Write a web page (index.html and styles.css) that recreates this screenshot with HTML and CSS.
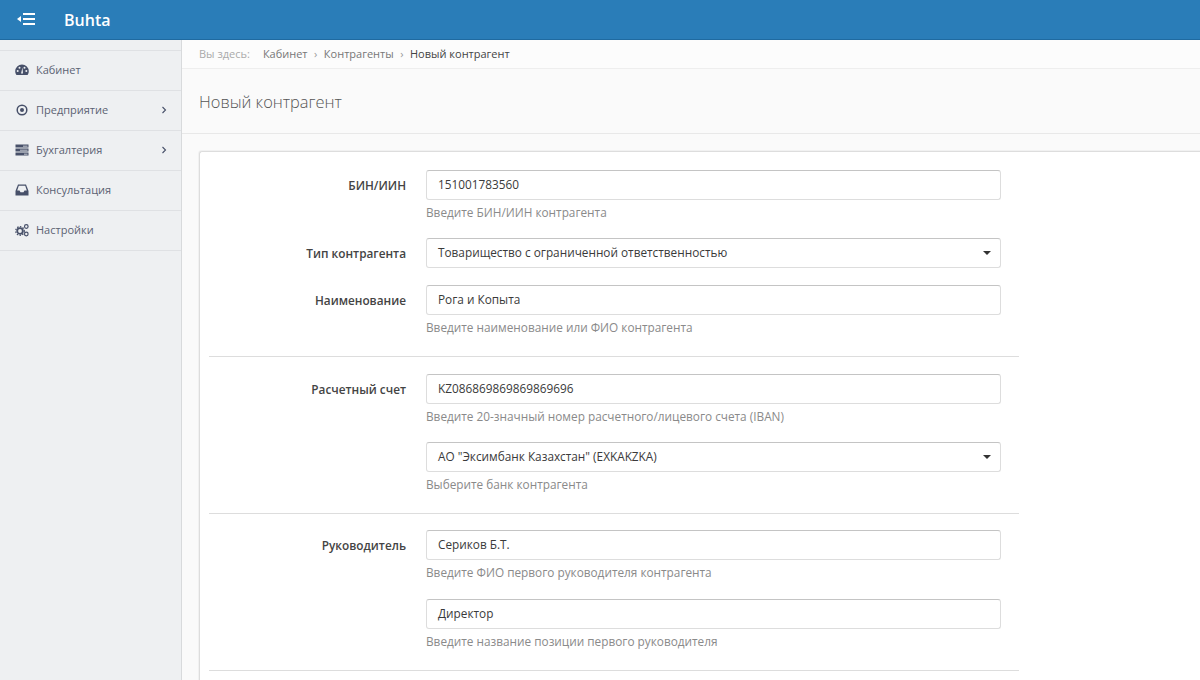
FILE: index.html
```html
<!DOCTYPE html>
<html lang="ru">
<head>
<meta charset="utf-8">
<title>Buhta</title>
<link rel="stylesheet" href="styles.css">
</head>
<body>
<header class="topbar">
  <svg class="toggle" viewBox="0 0 18 12" width="18" height="12"><path d="M0 6 4 3v6z" fill="#fff"/><path d="M6 0h12v2H6zM6 5h12v2H6zM6 10h12v2H6z" fill="#fff"/></svg>
  <span class="brand">Buhta</span>
</header>
<div class="layout">
  <nav class="sidebar">
    <a class="nav-item">
      <svg class="nav-icon" viewBox="0 0 14 14" width="14" height="14"><path d="M7 1.500A6.800 6.800 0 0 0 .2 8.300c0 1.500.5 2.700 1.300 3.700h11c.8-1 1.300-2.200 1.300-3.700A6.800 6.800 0 0 0 7 1.500z" fill="#475069"/><g fill="#eef0f2"><circle cx="2.700" cy="8" r="1"/><circle cx="4.500" cy="4.700" r="1"/><circle cx="9.500" cy="4.700" r="1"/><circle cx="11.300" cy="8" r="1"/><path d="M6 10.500 7.500 4.500 8 10.500z"/></g></svg>
      <span>Кабинет</span>
    </a>
    <a class="nav-item">
      <svg class="nav-icon" viewBox="0 0 14 14" width="14" height="14"><circle cx="7" cy="7" r="4.800" fill="none" stroke="#475069" stroke-width="1.500"/><circle cx="7" cy="7" r="2" fill="#475069"/></svg>
      <span>Предприятие</span>
      <svg class="chev" viewBox="0 0 6 8" width="6" height="8"><path d="M1.500 1 4.500 4 1.500 7" fill="none" stroke="#475069" stroke-width="1.100"/></svg>
    </a>
    <a class="nav-item">
      <svg class="nav-icon" viewBox="0 0 14 14" width="14" height="14"><path d="M.5 1.500h13v3H.5zM.5 5.500h13v3H.5zM.5 9.500h13v3H.5z" fill="#475069"/><path d="M8 2.700h4.500v.7H8zM5 6.700h7.500v.7H5zM9 10.700h3.500v.7H9z" fill="#eef0f2"/></svg>
      <span>Бухгалтерия</span>
      <svg class="chev" viewBox="0 0 6 8" width="6" height="8"><path d="M1.500 1 4.500 4 1.500 7" fill="none" stroke="#475069" stroke-width="1.100"/></svg>
    </a>
    <a class="nav-item">
      <svg class="nav-icon" viewBox="0 0 14 14" width="14" height="14"><path d="M3 1.500h8l2.500 6.500v4.500H.5V8z" fill="#475069"/><path d="M3.800 2.800h6.400L11.800 7.500H9.500L8.500 9.300h-3L4.500 7.500H2.200z" fill="#eef0f2"/></svg>
      <span>Консультация</span>
    </a>
    <a class="nav-item">
      <svg class="nav-icon" viewBox="0 0 14 14" width="14" height="14"><circle cx="5" cy="8" r="2.800" fill="none" stroke="#475069" stroke-width="1.800"/><circle cx="5" cy="8" r="4.300" fill="none" stroke="#475069" stroke-width="1.200" stroke-dasharray="1.500 1.300"/><circle cx="11.300" cy="3.500" r="1.800" fill="none" stroke="#475069" stroke-width="1.200"/><circle cx="11.300" cy="11" r="1.800" fill="none" stroke="#475069" stroke-width="1.200"/></svg>
      <span>Настройки</span>
    </a>
  </nav>
  <main class="content">
    <div class="crumbs">
      <span class="crumb-lead">Вы здесь:</span>
      <a class="crumb">Кабинет</a>
      <span class="crumb-sep">›</span>
      <a class="crumb">Контрагенты</a>
      <span class="crumb-sep">›</span>
      <span class="crumb-current">Новый контрагент</span>
    </div>
    <div class="page-head"><h1>Новый контрагент</h1></div>
    <section class="card">
      <form class="form">
        <div class="field-row">
          <label>БИН/ИИН</label>
          <div class="field">
            <div class="input">151001783560</div>
            <div class="help">Введите БИН/ИИН контрагента</div>
          </div>
        </div>
        <div class="field-row">
          <label>Тип контрагента</label>
          <div class="field">
            <div class="input select">Товарищество с ограниченной ответственностью</div>
          </div>
        </div>
        <div class="field-row">
          <label>Наименование</label>
          <div class="field">
            <div class="input">Рога и Копыта</div>
            <div class="help">Введите наименование или ФИО контрагента</div>
          </div>
        </div>
        <hr>
        <div class="field-row">
          <label>Расчетный счет</label>
          <div class="field">
            <div class="input">KZ086869869869869696</div>
            <div class="help">Введите 20-значный номер расчетного/лицевого счета (IBAN)</div>
            <div class="input select stacked">АО "Эксимбанк Казахстан" (EXKAKZKA)</div>
            <div class="help">Выберите банк контрагента</div>
          </div>
        </div>
        <hr>
        <div class="field-row tight">
          <label>Руководитель</label>
          <div class="field">
            <div class="input">Сериков Б.Т.</div>
            <div class="help">Введите ФИО первого руководителя контрагента</div>
            <div class="input stacked">Директор</div>
            <div class="help">Введите название позиции первого руководителя</div>
          </div>
        </div>
        <hr>
      </form>
    </section>
  </main>
</div>
</body>
</html>
```
FILE: styles.css
```css
* { box-sizing: border-box; }
html, body { height: 680px; overflow: hidden; }
body {
  margin: 0;
  font-family: "Open Sans", sans-serif;
  font-size: 11.8px;
  line-height: 18px;
  color: #333;
  background: #fafafa;
}
.topbar {
  height: 40px;
  background: #2a7db8;
  border-bottom: 1px solid #1f6aa0;
  display: flex;
  align-items: center;
  padding-left: 17px;
  color: #fff;
}
.toggle { flex: none; margin-bottom: 2px; }
.brand { margin-left: 29px; font-size: 16px; font-weight: 600; }
.layout { display: flex; height: 640px; overflow: hidden; }
.sidebar {
  flex: none;
  width: 182px;
  background: #eef0f2;
  border-right: 1px solid #d8dadc;
  padding-top: 10px;
}
.nav-item {
  display: flex;
  align-items: center;
  height: 40px;
  padding: 0 14px 1px 15px;
  border-top: 1px solid #dfe1e4;
  color: #5b6272;
  font-size: 11px;
}
.nav-item:last-child { height: 41px; border-bottom: 1px solid #dfe1e4; }
.nav-icon { flex: none; margin-right: 7px; }
.chev { margin-left: auto; }
.content { flex: 1; min-width: 0; }
.crumbs {
  height: 29px;
  background: #fcfcfc;
  border-bottom: 1px solid #eee;
  display: flex;
  align-items: center;
  padding-left: 17px;
  font-size: 11px;
}
.crumb-lead { color: #aaa; margin-right: 13px; }
.crumb { color: #777; }
.crumb-sep { color: #999; margin: 0 6.500px; }
.crumb-current { color: #444; }
.page-head {
  height: 65px;
  border-bottom: 1px solid #e8e8e8;
  display: flex;
  align-items: center;
  padding: 1px 0 0 17px;
}
h1 { margin: 0; font-size: 16.400px; font-weight: 300; color: #555; line-height: 20px; }
.card {
  margin: 17px 0 0 17px;
  background: #fff;
  border: 1px solid #ddd;
  border-width: 1px 0 0 1px;
  border-radius: 3px 0 0 0;
  box-shadow: 0 0 0 1px #f1f1f1;
  padding: 18px 9px 0;
  height: 529px;
}
.form { width: 810px; }
.field-row {
  display: grid;
  grid-template-columns: 197px 575px;
  column-gap: 20px;
  margin-bottom: 17px;
}
label { text-align: right; font-weight: 600; color: #444; line-height: 30px; }
.input {
  height: 30px;
  border: 1px solid #ddd;
  border-top-color: #c4c4c4;
  border-radius: 3px;
  background: #fff;
  padding: 0 11px;
  line-height: 27px;
  color: #3a3a3a;
}
.select { position: relative; }
.select::after {
  content: "";
  position: absolute;
  right: 9px;
  top: 12px;
  border: 4px solid transparent;
  border-top-color: #333;
  border-bottom: 0;
}
.help { margin-top: 3px; color: #8a8a8a; height: 18px; }
.stacked { margin-top: 17px; }
.tight { margin-top: -1px; }
.tight .stacked { margin-top: 18px; }
hr { margin: 20px 0 17px; border: 0; border-top: 1px solid #ddd; }
hr:last-child { margin-bottom: 0; }
.field-row:has(+ hr) { margin-bottom: 0; }
```
